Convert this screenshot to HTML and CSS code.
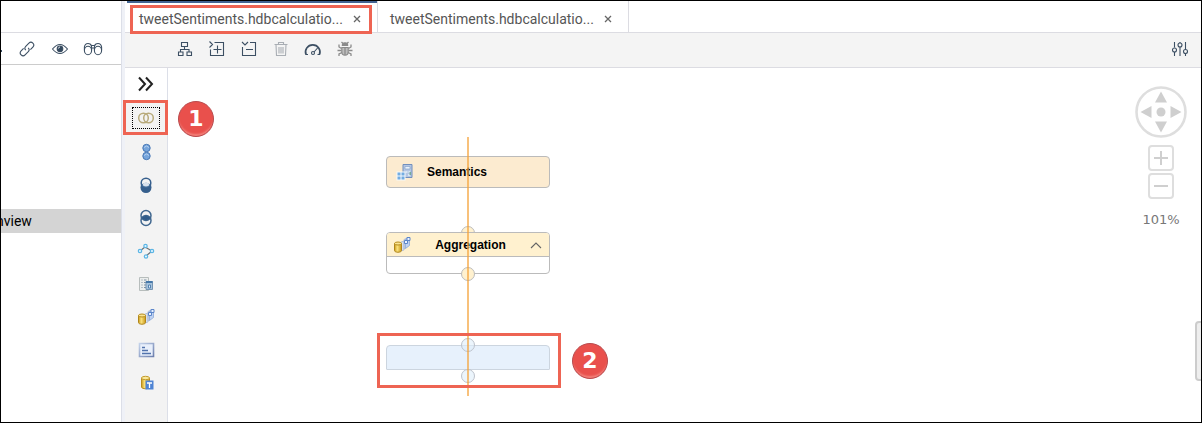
FILE: index.html
```html
<!DOCTYPE html>
<html lang="en">
<head>
<meta charset="utf-8">
<title>Calculation view editor</title>
<link rel="stylesheet" href="styles.css">
</head>
<body>
<svg class="defs" aria-hidden="true">
  <defs>
    <linearGradient id="gold" x1="0" x2="1" y1="0" y2="0"><stop offset="0" stop-color="#c99a1c"/><stop offset=".4" stop-color="#fbe27c"/><stop offset="1" stop-color="#c9981a"/></linearGradient>
    <linearGradient id="steel" x1="0" x2="1" y1="0" y2="1"><stop offset="0" stop-color="#c3d2ea"/><stop offset="1" stop-color="#6e80ae"/></linearGradient>
    <symbol id="aggregation" viewBox="0 0 18 18">
      <path d="M8 6l3-1v9l-3 1zM11 3.500l3-1.500v9l-3 2z" fill="#d5dff0" stroke="#a9b8d3" stroke-width=".8"/>
      <path d="M12.500 3.500l4-2v8l-4 3z" fill="#bfd2f2" stroke="#8da9d8" stroke-width=".8"/>
      <path d="M11.500 4.500h3v3h-3zM14 1.500h3v3h-3z" fill="#eaf2ff" stroke="#5c86ca"/>
      <path d="M1.500 7.500v7c0 2.300 7 2.300 7 0v-7z" fill="url(#gold)" stroke="#b08518"/>
      <ellipse cx="5" cy="7.500" rx="3.500" ry="1.500" fill="#fae493" stroke="#b68b1c"/>
    </symbol>
  </defs>
</svg>
<div class="app">
  <aside class="explorer">
    <div class="explorer-head"></div>
    <div class="explorer-tools">
      <span class="edge-mark"></span>
      <button class="icon-btn" aria-label="Link with editor"><svg class="icon" viewBox="0 0 16 16"><g transform="rotate(-45 8 8)"><path d="M6 5.200H2.500a2.800 2.800 0 0 0 0 5.600H7A2.800 2.800 0 0 0 9.700 8M10 10.800h3.500a2.800 2.800 0 0 0 0-5.600H9A2.800 2.800 0 0 0 6.300 8"/></g></svg></button>
      <button class="icon-btn" aria-label="Show hidden files"><svg class="icon" viewBox="0 0 16 16"><path d="M.5 8Q8-1 15.500 8 8 17 .5 8z"/><circle cx="8" cy="7.800" r="2.800" fill="#34495e"/><path d="M6.500 7.500A1.500 1.500 0 0 1 8 6" stroke="#fff" stroke-width=".8"/></svg></button>
      <button class="icon-btn" aria-label="Find"><svg class="icon wide" viewBox="0 0 20 16"><ellipse cx="5" cy="9.500" rx="3.600" ry="4.200"/><ellipse cx="15" cy="9.500" rx="3.600" ry="4.200"/><path d="M1.400 9V6Q2 2.500 5 2.500T8.600 6V9M18.600 9V6Q18 2.500 15 2.500T11.400 6V9M5 2.500q2.500 0 3.600 2h2.800q1.100-2 3.600-2M8.600 7h2.800"/></svg></button>
    </div>
    <div class="tree"><div class="tree-row"><span>nview</span></div></div>
  </aside>
  <div class="splitter"></div>
  <main class="editor">
    <nav class="tabs">
      <div class="tab active"><a href="#first">tweetSentiments.hdbcalculatio...</a><button class="close" aria-label="Close first tab"><svg viewBox="0 0 8 8"><path d="M1 1l6 6M7 1l-6 6"/></svg></button><span class="callout tab-callout"></span></div>
      <div class="tab"><a href="#second">tweetSentiments.hdbcalculatio...</a><button class="close" aria-label="Close second tab"><svg viewBox="0 0 8 8"><path d="M1 1l6 6M7 1l-6 6"/></svg></button></div>
    </nav>
    <div class="toolbar">
      <button class="icon-btn" aria-label="Auto layout"><svg class="icon" viewBox="0 0 16 16"><path d="M4.500 1.500h6v4h-6zM1.500 11h4.500v3.500H1.500zM10 11h4.500v3.500H10zM7.500 5.500v3M3.500 11V8.500h8.500V11"/></svg></button>
      <button class="icon-btn" aria-label="Expand all"><svg class="icon" viewBox="0 0 16 16"><path d="M5.500 1.500h9v13h-13V8.500M8.500 4.500v8M4.500 8.500h8M.5.500l3 3-3 3"/></svg></button>
      <button class="icon-btn" aria-label="Collapse all"><svg class="icon" viewBox="0 0 16 16"><path d="M9 1.500h5.500v13h-13V6M5 8.500h7M1 1l3 3 3-3"/></svg></button>
      <button class="icon-btn muted" aria-label="Delete"><svg class="icon" viewBox="0 0 16 16"><path d="M1.500 3.500h13M5.500 3.500v-2h5v2M3 3.500l.5 11h9l.5-11M6 6v6.500M8 6v6.500M10 6v6.500"/></svg></button>
      <button class="icon-btn" aria-label="Performance"><svg class="icon wide" viewBox="0 0 20 16"><path d="M3 13.500A7.200 7.200 0 1 1 16.500 13.500" stroke-width="1.700"/><circle cx="10" cy="12" r="1.500"/><path d="M11 11l4-4.500M2.500 13.500h2.500M14.500 13.500h2.500"/></svg></button>
      <button class="icon-btn bug" aria-label="Debug"><svg class="icon" viewBox="0 0 16 16"><path d="M5.300 4.500a2.700 2.700 0 0 1 5.400 0z" fill="#8b8b8b"/><path d="M4.800 6.500h6.400v4.500a3.200 3.200 0 0 1-6.400 0z" fill="#bdbdbd"/><path d="M8 6.500v7.500M6 2.500L4.500 1M10 2.500L11.500 1M4.500 7.500L2 6V3.500M11.500 7.500L14 6V3.500M4.500 9.500H.5M11.500 9.500h4M5 11.500l-3 1.500v2M11 11.500l3 1.500v2" stroke-width="1.300"/></svg></button>
      <button class="icon-btn settings" aria-label="Settings"><svg class="icon" viewBox="0 0 16 16"><path d="M2.500 1v5.500M2.500 11v4M8 1v1M8 6v9M13.500 1v7.500M13.500 13v2"/><circle cx="2.500" cy="9" r="2"/><circle cx="8" cy="4" r="2"/><circle cx="13.500" cy="10.500" r="2"/></svg></button>
    </div>
    <div class="workspace">
      <div class="palette">
        <button class="palette-item expand" aria-label="Expand palette"><svg viewBox="0 0 18 18"><path d="M2 2.500l6 6.500-6 6.500M9 2.500l6 6.500-6 6.500" fill="none" stroke="#222" stroke-width="2"/></svg></button>
        <button class="palette-item selected" aria-label="Join"><span class="focus-ring"><svg viewBox="0 0 18 18"><g fill="none" stroke="#b8aa7b" stroke-width="1.500"><circle cx="6.500" cy="9" r="4.800"/><circle cx="11.500" cy="9" r="4.800"/></g></svg></span><span class="callout item-callout"></span></button>
        <button class="palette-item" aria-label="Union"><svg viewBox="0 0 18 18"><g fill="#76a5dc" stroke="#4777b5"><circle cx="9.500" cy="5" r="3.700"/><circle cx="9.500" cy="13" r="3.700"/></g><path d="M7 4.500q2.500-3 5 0M7 12.500q2.500-3 5 0" stroke="#b5d0f0" fill="none"/></svg></button>
        <button class="palette-item" aria-label="Minus"><svg viewBox="0 0 18 18"><circle cx="9" cy="11.500" r="5.500" fill="#365f8d"/><circle cx="9" cy="7" r="4.800" fill="#f3f3f3" stroke="#365f8d" stroke-width="1.500"/><path d="M4.500 9a5 4 0 0 1 9 0 5 5 0 0 1-9 0" fill="#456f9c"/><path d="M6 7.500q3-2 6 0v2q-3 2-6 0z" fill="#d8e1ec"/></svg></button>
        <button class="palette-item" aria-label="Intersect"><svg viewBox="0 0 18 18"><g fill="none" stroke="#40678f" stroke-width="1.500"><circle cx="9" cy="6.500" r="5"/><circle cx="9" cy="11.500" r="5"/></g><path d="M4.500 9q4.500-4.500 9 0-4.500 4.500-9 0z" fill="#305b89"/></svg></button>
        <button class="palette-item" aria-label="Graph"><svg viewBox="0 0 18 18"><path d="M3 9l5-4 7 4-6 5" fill="none" stroke="#6b7277" stroke-width="1.200"/><g fill="#e5f6ff" stroke="#5bb5e5" stroke-width="1.200"><circle cx="3" cy="9" r="1.700"/><circle cx="8.500" cy="4" r="1.700"/><circle cx="15" cy="9" r="1.700"/><circle cx="9" cy="14.500" r="1.700"/></g></svg></button>
        <button class="palette-item" aria-label="Projection"><svg viewBox="0 0 18 18"><path d="M2.500 2.500h9v13h-9z" fill="#eceeed" stroke="#b7bdbc"/><path d="M4.500 5h1M4.500 7.500h1M4.500 10h1M4.500 12.500h1M7 5h2.500M7 7.500h2.500M7 10h2.500M7 12.500h2.500" stroke="#7e91a3"/><path d="M9 6.500h6.500v8H9z" fill="#a7c3dc" stroke="#7695b3"/><path d="M9 7h6.500" stroke="#4678aa" stroke-width="2"/><path d="M11.500 10h2v3h-2z" fill="#e5effa" stroke="#5583b2"/></svg></button>
        <button class="palette-item" aria-label="Aggregation"><svg><use href="#aggregation"/></svg></button>
        <button class="palette-item" aria-label="Rank"><svg viewBox="0 0 18 18"><path d="M2.500 2.500h14v13h-14z" fill="#e8effb" stroke="url(#steel)" stroke-width="1.600"/><path d="M5 6.500h3M5 9.500h6M5 12.500h9" stroke="#5273ad" stroke-width="1.700"/></svg></button>
        <button class="palette-item" aria-label="Table function"><svg viewBox="0 0 18 18"><path d="M4.500 4v9c0 2.300 8 2.300 8 0V4z" fill="url(#gold)" stroke="#b98d1e"/><ellipse cx="8.500" cy="4" rx="4" ry="1.700" fill="#fae899" stroke="#c39b2e"/><path d="M8.500 6.500h8v9h-8z" fill="#4f84d4"/><path d="M10 9h5M12.500 9v5" stroke="#fff" stroke-width="1.300"/></svg></button>
      </div>
      <section class="canvas" aria-label="Diagram">
        <span class="badge badge-one">1</span>
        <div class="node semantics"><svg class="node-icon" viewBox="0 0 18 18"><path d="M7 1.500h9v13H7z" fill="#b4c6e3" stroke="#718fbd"/><path d="M9 3.500h5v2.500H9z" fill="#eaf3fc" stroke="#7d9ac4" stroke-width=".6"/><path d="M9.500 8h2v2h-2zM12.500 8h1.500v2h-1.500zM12 11h2v2h-2z" fill="#d6e5f2"/><path d="M13.500 9H15v3h-1.500z" fill="#76aa98"/><path d="M.5 8.500h9v9h-9z" fill="#f4f8fb"/><path d="M1.500 9.500h3v3h-3zM5.500 9.500h3v3h-3zM1.500 13.500h3v3h-3zM5.500 13.500h3v3h-3z" fill="#73ace1"/></svg><strong>Semantics</strong></div>
        <span class="port agg-in"></span>
        <div class="node aggregation">
          <div class="node-head"><svg class="node-icon"><use href="#aggregation"/></svg><strong>Aggregation</strong><button class="collapse" aria-label="Collapse node"><svg viewBox="0 0 12 8"><path d="M1 7l5-5 5 5"/></svg></button></div>
        </div>
        <span class="port agg-out"></span>
        <div class="node placeholder"></div>
        <span class="port blue new-in"></span>
        <span class="port blue new-out"></span>
        <span class="guide"></span>
        <span class="callout node-callout"></span>
        <span class="badge badge-two">2</span>
        <div class="navigator">
          <button class="pan" aria-label="Pan"><svg viewBox="0 0 52 52"><circle cx="26" cy="26" r="24.500" fill="none" stroke="#dedede" stroke-width="2.600"/><g fill="#cfcfcf"><circle cx="26" cy="26" r="4.500"/><path d="M26 5.500l6 11H20zM26 46.500l6-11H20zM5.500 26l11-6v12zM46.500 26l-11-6v12z"/></g></svg></button>
          <button class="zoom" aria-label="Zoom in"><svg viewBox="0 0 22 22"><path d="M4 11h14M11 4v14"/></svg></button>
          <button class="zoom" aria-label="Zoom out"><svg viewBox="0 0 22 22"><path d="M4 11h14"/></svg></button>
          <span class="zoom-level">101%</span>
        </div>
        <span class="side-handle"></span>
      </section>
    </div>
  </main>
</div>
</body>
</html>
```
FILE: styles.css
```css
* { box-sizing: border-box; }
body { margin: 0; font-family: Roboto, "Noto Sans", sans-serif; font-size: 14px; color: #555; }
button { margin: 0; padding: 0; border: 0; background: none; color: inherit; font: inherit; }
svg { display: block; }
.defs { position: absolute; width: 0; height: 0; }
.app { display: flex; min-height: 100vh; border: 1px solid #000; background: #fff; overflow: hidden; }

.explorer { flex: 0 0 120px; }
.explorer-head { height: 32px; border-bottom: 1px solid #dcdce2; }
.explorer-tools { display: flex; align-items: center; gap: 17px; height: 32px; border-bottom: 1px solid #ccc; }
.edge-mark { width: 1px; height: 2px; margin-top: 4px; background: #34495e; }
.tree { padding-top: 144px; }
.tree-row { display: flex; align-items: center; height: 24px; background: #d4d4d4; color: #000; overflow: hidden; }
.tree-row span { margin-left: -5px; }
.splitter { flex: 0 0 4px; background: #eff1f7; border-left: 1px solid #dcdfe8; }
.editor { flex: 1; display: flex; flex-direction: column; min-width: 0; }

.icon-btn { display: flex; justify-content: center; width: 16px; }
.icon { flex: none; width: 16px; height: 16px; fill: none; stroke: #3c4f63; stroke-width: 1.1; }
.icon.wide { width: 20px; }
.muted .icon { stroke: #a9aeb4; }
.bug .icon { stroke: #8b8b8b; }

.tabs { display: flex; height: 32px; padding-left: 2px; border-bottom: 1px solid #dcdce2; }
.tab { position: relative; display: flex; align-items: center; justify-content: space-between; width: 251px; padding: 4px 16px 0 12px; border-right: 1px solid #dcdce2; }
.tab.active { box-shadow: inset 0 2px #426391; }
.tab a { color: #555; text-decoration: none; white-space: nowrap; }
.close svg { width: 8px; height: 8px; fill: none; stroke: #666; stroke-width: 1.3; }
.toolbar { display: flex; align-items: center; gap: 16px; height: 35px; padding: 0 13px 2px 52px; border-bottom: 1px solid #dcdce2; background: #f4f4f4; }
.settings { margin-left: auto; }

.workspace { flex: 1; display: flex; }
.palette { flex: 0 0 43px; border-right: 1px solid #dcdfe8; background: #f3f3f3; }
.palette-item { position: relative; display: flex; align-items: center; justify-content: center; width: 100%; height: 33px; }
.palette-item svg { width: 18px; height: 18px; }
.palette-item.expand { height: 32px; background: #fff; }
.palette-item.selected { height: 35px; }
.focus-ring { display: flex; align-items: center; justify-content: center; width: 28px; height: 22px; border: 1px dotted #000; }
.canvas { position: relative; flex: 1; overflow: hidden; }

.callout { position: absolute; border: 3px solid #ee6453; pointer-events: none; }
.tab-callout { top: 4px; left: 3px; right: 5px; height: 29px; z-index: 1; }
.item-callout { inset: 0 -1px 0 -2px; }
.node-callout { left: 209px; top: 265px; width: 184px; height: 55px; }
.badge { position: absolute; display: flex; align-items: center; justify-content: center; width: 36px; height: 36px; border: 1px solid #b84b4e; border-radius: 50%; background: #e9504c; box-shadow: inset 0 -3px 2px -1px #f2827b; color: #fff; font: bold 22px/22px "DejaVu Sans", sans-serif; }
.badge-one { left: 10px; top: 33px; }
.badge-two { left: 404px; top: 275px; }

.node { position: absolute; left: 218px; width: 164px; border: 1px solid #bbb; border-radius: 4px; color: #000; font: 12px/16px "Liberation Sans", Arial, sans-serif; }
.node-icon { width: 18px; height: 18px; }
.semantics { top: 88px; height: 32px; display: flex; align-items: center; gap: 13px; padding-left: 9px; background: #fcebd0; }
.aggregation { top: 164px; height: 42px; background: #fff; overflow: hidden; }
.node-head { display: flex; align-items: center; justify-content: space-between; height: 24px; padding: 0 7px 0 6px; border-bottom: 1px solid #bbb; background: #fff1cf; }
.collapse svg { width: 12px; height: 8px; fill: none; stroke: #666; stroke-width: 1.1; }
.placeholder { top: 277px; height: 25px; border-color: #ccd5df; border-radius: 4px 4px 1px 1px; background: #e7f1fc; }
.port { position: absolute; left: 293px; width: 14px; height: 14px; border: 1px solid #bbb; border-radius: 50%; background: #fff1cf; }
.agg-in { top: 158px; }
.agg-out { top: 199px; }
.port.blue { border-color: #bdc2cb; background: #e0eefa99; }
.new-in { top: 270px; }
.new-out { top: 301px; }
.guide { position: absolute; left: 299px; top: 69px; width: 2px; height: 259px; background: #f5a33dad; }

.navigator { position: absolute; top: 18px; right: 14px; display: flex; flex-direction: column; align-items: center; width: 52px; gap: 2px; }
.pan { margin-bottom: 5px; }
.pan svg { width: 52px; height: 52px; }
.zoom { display: block; width: 26px; height: 26px; border: 2px solid #dedede; border-radius: 4px; }
.zoom svg { width: 22px; height: 22px; fill: none; stroke: #cfcfcf; stroke-width: 2; }
.zoom-level { margin-top: 11px; color: #777; font: 13px/16px "DejaVu Sans", sans-serif; }
.side-handle { position: absolute; top: 253px; right: -4px; width: 10px; height: 60px; border: 2px solid #ccc; border-radius: 4px; background: #eee; }
```
